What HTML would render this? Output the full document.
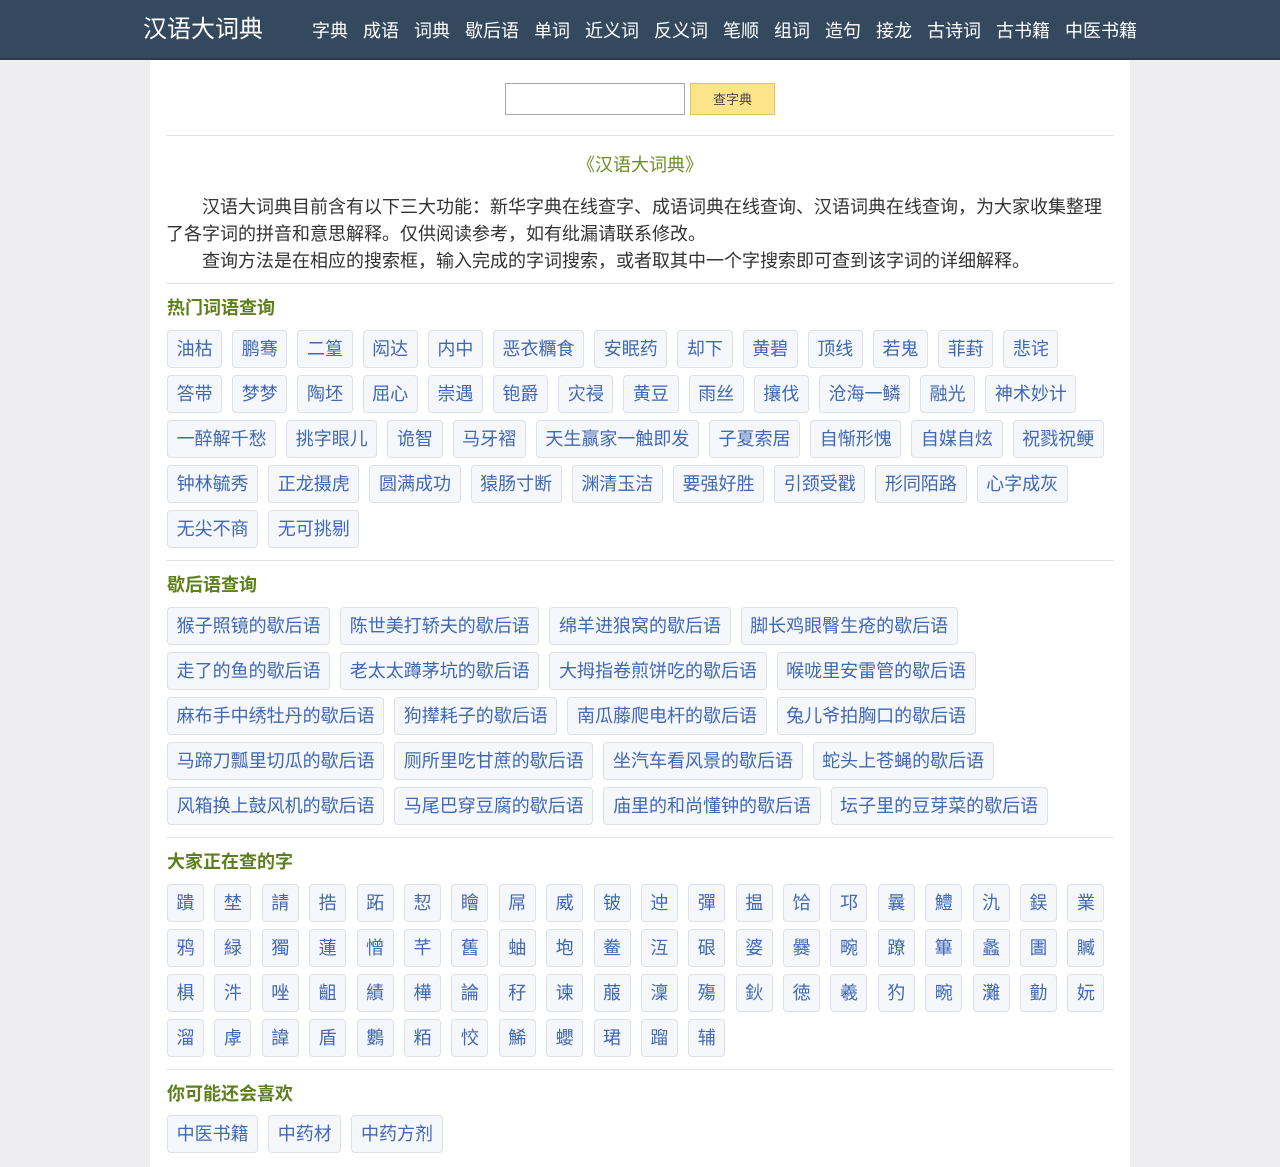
<!DOCTYPE html>
<html><head><meta charset="utf-8">
<style>
*{margin:0;padding:0;box-sizing:border-box}
body{background:#eeeef0;font-family:"Liberation Sans","Noto Sans CJK SC",sans-serif;width:1280px;height:1167px;overflow:hidden}
.hd{height:60px;background:#34495e;border-bottom:2px solid #2a3a4c;position:relative}
.logo{position:absolute;left:143px;top:15px;color:#fff;font-size:24px;line-height:30px}
.nav{position:absolute;left:312px;top:18px;font-size:18px;line-height:26px;color:#fff;white-space:nowrap}
.nav span{margin-right:15px}
.wrap{position:absolute;left:150px;top:60px;width:980px;height:1107px;background:#fff;padding:0 16px}
.search{position:absolute;top:23px;left:355px}
.search .in{position:absolute;left:0;top:0;width:180px;height:32px;border:1px solid #aaa}
.search .bt{position:absolute;left:185px;top:0;width:85px;height:32px;background:#fbe48a;border:1px solid #e2c45e;font-size:13px;color:#444;text-align:center;line-height:32px}
.hr{position:absolute;left:16px;width:948px;border-top:1px solid #e2e2e2}
.title{position:absolute;top:92px;left:0;width:980px;text-align:center;color:#6b8e23;font-size:18px;line-height:26px}
.p{position:absolute;top:133px;left:16px;width:948px;font-size:18px;line-height:27px;color:#333}
.p div{text-indent:36px}
h3{position:absolute;left:17px;font-size:18px;color:#5e7f1e;font-weight:bold;line-height:26px}
.tags{position:absolute;left:17px;width:948px}
.row{height:45px;white-space:nowrap}
.t{display:inline-block;height:38px;line-height:36px;padding:0 8.6px;border:1px solid #dde0e4;border-radius:4px;background:#f5f7fa;color:#3f68b5;font-size:18px;margin-right:10px;vertical-align:top}
.c .t{width:37px;padding:0;text-align:center;margin-right:10.4px}
</style></head><body>
<div class="hd"><div class="logo">汉语大词典</div>
<div class="nav"><span>字典</span><span>成语</span><span>词典</span><span>歇后语</span><span>单词</span><span>近义词</span><span>反义词</span><span>笔顺</span><span>组词</span><span>造句</span><span>接龙</span><span>古诗词</span><span>古书籍</span><span>中医书籍</span></div></div>
<div class="wrap">
<div class="search"><div class="in"></div><div class="bt">查字典</div></div>
<div class="hr" style="top:75px"></div>
<div class="title">《汉语大词典》</div>
<div class="p" style="top:134px"><div>汉语大词典目前含有以下三大功能：新华字典在线查字、成语词典在线查询、汉语词典在线查询，为大家收集整理了各字词的拼音和意思解释。仅供阅读参考，如有纰漏请联系修改。</div><div>查询方法是在相应的搜索框，输入完成的字词搜索，或者取其中一个字搜索即可查到该字词的详细解释。</div></div>
<div class="hr" style="top:223px"></div>
<h3 style="top:235px">热门词语查询</h3>
<div class="tags" style="top:270px">
<div class="row"><span class="t">油枯</span><span class="t">鹏骞</span><span class="t">二篁</span><span class="t">闳达</span><span class="t">内中</span><span class="t">恶衣糲食</span><span class="t">安眠药</span><span class="t">却下</span><span class="t">黄碧</span><span class="t">顶线</span><span class="t">若鬼</span><span class="t">菲葑</span><span class="t">悲诧</span></div>
<div class="row"><span class="t">答带</span><span class="t">梦梦</span><span class="t">陶坯</span><span class="t">屈心</span><span class="t">崇遇</span><span class="t">铇爵</span><span class="t">灾祲</span><span class="t">黄豆</span><span class="t">雨丝</span><span class="t">攘伐</span><span class="t">沧海一鳞</span><span class="t">融光</span><span class="t">神术妙计</span></div>
<div class="row"><span class="t">一醉解千愁</span><span class="t">挑字眼儿</span><span class="t">诡智</span><span class="t">马牙褶</span><span class="t">天生赢家一触即发</span><span class="t">子夏索居</span><span class="t">自惭形愧</span><span class="t">自媒自炫</span><span class="t">祝戮祝鲠</span></div>
<div class="row"><span class="t">钟林毓秀</span><span class="t">正龙摄虎</span><span class="t">圆满成功</span><span class="t">猿肠寸断</span><span class="t">渊清玉洁</span><span class="t">要强好胜</span><span class="t">引颈受戳</span><span class="t">形同陌路</span><span class="t">心字成灰</span></div>
<div class="row"><span class="t">无尖不商</span><span class="t">无可挑剔</span></div>
</div>
<div class="hr" style="top:500px"></div>
<h3 style="top:512px">歇后语查询</h3>
<div class="tags" style="top:547px">
<div class="row"><span class="t">猴子照镜的歇后语</span><span class="t">陈世美打轿夫的歇后语</span><span class="t">绵羊进狼窝的歇后语</span><span class="t">脚长鸡眼臀生疮的歇后语</span></div>
<div class="row"><span class="t">走了的鱼的歇后语</span><span class="t">老太太蹲茅坑的歇后语</span><span class="t">大拇指卷煎饼吃的歇后语</span><span class="t">喉咙里安雷管的歇后语</span></div>
<div class="row"><span class="t">麻布手中绣牡丹的歇后语</span><span class="t">狗撵耗子的歇后语</span><span class="t">南瓜藤爬电杆的歇后语</span><span class="t">兔儿爷拍胸口的歇后语</span></div>
<div class="row"><span class="t">马蹄刀瓢里切瓜的歇后语</span><span class="t">厕所里吃甘蔗的歇后语</span><span class="t">坐汽车看风景的歇后语</span><span class="t">蛇头上苍蝇的歇后语</span></div>
<div class="row"><span class="t">风箱换上鼓风机的歇后语</span><span class="t">马尾巴穿豆腐的歇后语</span><span class="t">庙里的和尚懂钟的歇后语</span><span class="t">坛子里的豆芽菜的歇后语</span></div>
</div>
<div class="hr" style="top:777px"></div>
<h3 style="top:789px">大家正在查的字</h3>
<div class="tags c" style="top:824px">
<div class="row"><span class="t">蹪</span><span class="t">埜</span><span class="t">請</span><span class="t">捁</span><span class="t">跖</span><span class="t">恝</span><span class="t">瞺</span><span class="t">屌</span><span class="t">威</span><span class="t">铍</span><span class="t">迚</span><span class="t">彈</span><span class="t">揾</span><span class="t">饸</span><span class="t">邛</span><span class="t">曩</span><span class="t">鱧</span><span class="t">氿</span><span class="t">鋘</span><span class="t">業</span></div>
<div class="row"><span class="t">鸦</span><span class="t">緑</span><span class="t">獨</span><span class="t">蓮</span><span class="t">憎</span><span class="t">芊</span><span class="t">舊</span><span class="t">蚰</span><span class="t">垉</span><span class="t">鲞</span><span class="t">沍</span><span class="t">硍</span><span class="t">婆</span><span class="t">爨</span><span class="t">畹</span><span class="t">蹽</span><span class="t">篳</span><span class="t">蠡</span><span class="t">圕</span><span class="t">贓</span></div>
<div class="row"><span class="t">椇</span><span class="t">汼</span><span class="t">唑</span><span class="t">齟</span><span class="t">績</span><span class="t">樺</span><span class="t">論</span><span class="t">秄</span><span class="t">谏</span><span class="t">菔</span><span class="t">澟</span><span class="t">殤</span><span class="t">鈥</span><span class="t">徳</span><span class="t">羲</span><span class="t">犳</span><span class="t">畹</span><span class="t">灘</span><span class="t">勭</span><span class="t">妧</span></div>
<div class="row"><span class="t">溜</span><span class="t">虖</span><span class="t">諱</span><span class="t">盾</span><span class="t">鷜</span><span class="t">粨</span><span class="t">恔</span><span class="t">鯑</span><span class="t">蠳</span><span class="t">珺</span><span class="t">蹓</span><span class="t">辅</span></div>
</div>
<div class="hr" style="top:1009px"></div>
<h3 style="top:1021px">你可能还会喜欢</h3>
<div class="tags" style="top:1055px">
<div class="row"><span class="t">中医书籍</span><span class="t">中药材</span><span class="t">中药方剂</span></div>
</div>
</div>
</body></html>
